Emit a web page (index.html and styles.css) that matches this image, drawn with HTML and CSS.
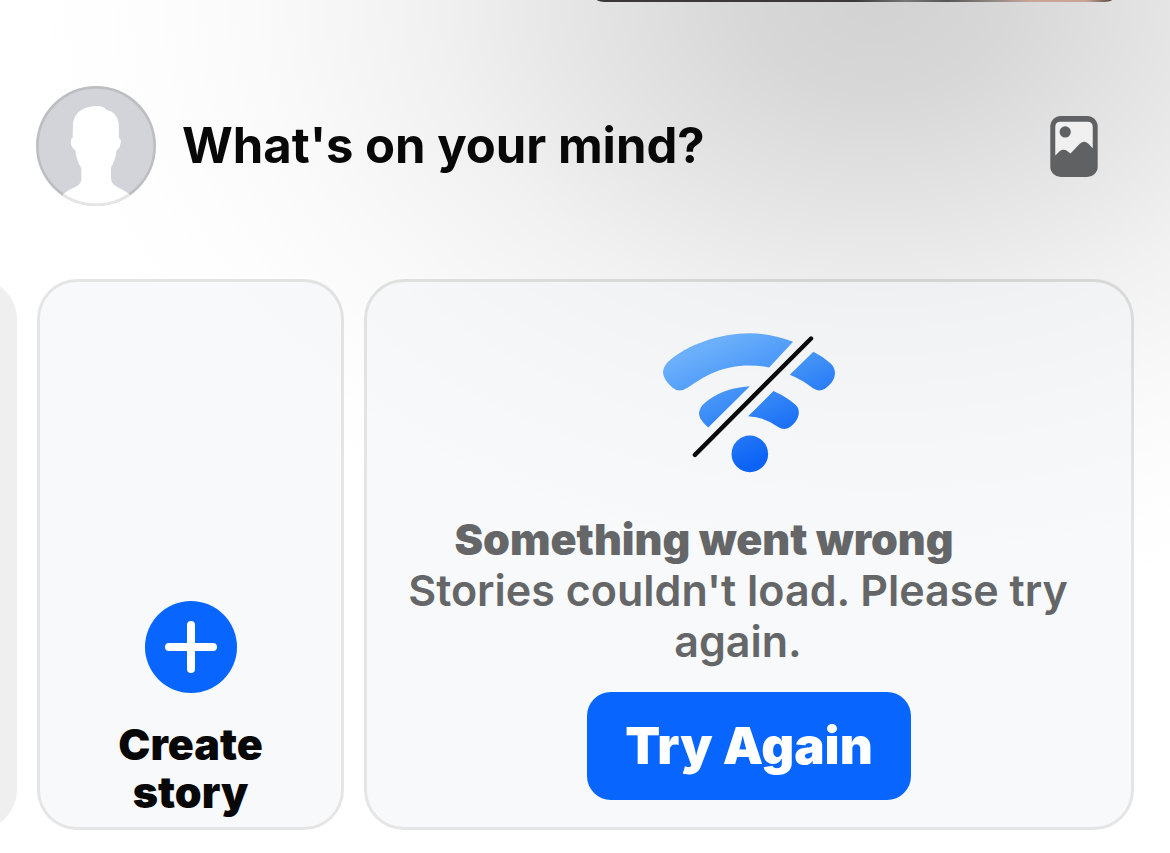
FILE: index.html
```
<!DOCTYPE html>
<html lang="en">
<head>
  <meta charset="UTF-8">
  <meta name="viewport" content="width=device-width, initial-scale=1.0">
  <title>Feed</title>
  <link rel="stylesheet" href="styles.css">
</head>
<body>

  <div class="cover-edge"></div>

  <section class="composer">
    <a href="#" class="avatar" aria-label="Your profile">
      <svg viewBox="108 78 360 360">
        <circle cx="288" cy="258" r="180" fill="#d2d4d9"/>
        <clipPath id="round"><circle cx="288" cy="258" r="180"/></clipPath>
        <path clip-path="url(#round)" fill="#fff" d="M288 138Q308 136 319 149Q352 156 356 190L357 233Q364 236 362 250Q359 267 350 271Q346 302 333 322L333 358Q335 372 350 380Q370 389 388 402L410 450H170L190 402Q208 388 230 379Q244 370 244 358L244 325Q229 302 226 270Q214 265 212 246Q212 236 218 233L219 190Q226 142 288 138Z"/>
        <circle cx="288" cy="258" r="176" fill="none" stroke="#000" stroke-opacity=".1" stroke-width="8"/>
      </svg>
    </a>
    <button class="prompt">What's on your mind?</button>
    <button class="photo-btn" aria-label="Add photo">
      <svg viewBox="91 77 143 184">
        <rect x="91" y="77" width="143" height="184" rx="32" fill="#5f6163"/>
        <path fill="#f0f0f0" d="M122 94H203Q219 94 219 110V174L206 161Q193 149 180 161L152 190L143 183Q131 174 119 183L106 196V110Q106 94 122 94Z"/>
        <circle cx="136" cy="125" r="17" fill="#5f6163"/>
      </svg>
    </button>
  </section>

  <section class="stories">
    <div class="prev-card"></div>

    <button class="card create-card">
      <svg class="plus" viewBox="0 0 92 92">
        <circle cx="46" cy="46" r="46" fill="#0866ff"/>
        <path d="M46 24V68M24 46H68" stroke="#fff" stroke-width="8" stroke-linecap="round"/>
      </svg>
      <span class="create-label">Create story</span>
    </button>

    <div class="card error-card">
      <svg class="wifi" viewBox="69 68 517 420">
        <defs>
          <linearGradient id="blue" gradientUnits="userSpaceOnUse" x1="210" y1="100" x2="370" y2="450">
            <stop offset="0" stop-color="#6cb0fb"/>
            <stop offset=".5" stop-color="#3c8df7"/>
            <stop offset="1" stop-color="#0c63f5"/>
          </linearGradient>
        </defs>
        <g fill="url(#blue)">
          <path d="M330 68Q398 69 460 94L388 171Q360 165 328 165C250 165 195 195 145 231Q118 250 98 232C80 216 70 200 69 186Q69 172 82 156C140 102 240 68 330 68Z"/>
          <path d="M521 124Q550 138 574 160Q586 172 586 190Q584 215 556 235Q538 246 520 234Q488 208 450 193Z"/>
          <path d="M330 228L205 352Q190 340 181 324Q171 304 188 284Q240 234 330 228Z"/>
          <path d="M401 242Q438 258 468 284Q479 294 477 312Q473 335 450 351Q433 362 415 350Q375 320 325 318Z"/>
          <circle cx="330" cy="431" r="55"/>
        </g>
        <path d="M165 434L514 84" stroke="#0a0a0c" stroke-width="13" stroke-linecap="round"/>
      </svg>
      <div class="error-text">
        <h2>Something went wrong</h2>
        <p>Stories couldn't load. Please try again.</p>
      </div>
      <button class="retry-btn">Try Again</button>
    </div>
  </section>

</body>
</html>
```
FILE: styles.css
```
* {
  box-sizing: border-box;
}

body {
  margin: 0;
  min-height: 100vh;
  overflow-x: hidden;
  font-family: Inter, "Liberation Sans", sans-serif;
  color: #080809;
  /* soft shadow falling from the media above */
  background: radial-gradient(ellipse 860px 620px at 75% 0,
    rgba(0, 0, 0, 0.175) 0%,
    rgba(0, 0, 0, 0.155) 15%,
    rgba(0, 0, 0, 0.1) 35%,
    rgba(0, 0, 0, 0.055) 52%,
    rgba(0, 0, 0, 0.024) 70%,
    rgba(0, 0, 0, 0.008) 85%,
    rgba(0, 0, 0, 0) 100%) no-repeat #fff;
}

button {
  border: none;
  padding: 0;
  background: none;
  font-family: inherit;
  color: inherit;
  cursor: pointer;
}

svg {
  display: block;
}

.cover-edge {
  height: 2px;
  margin: 0 5% 0 51%;
  border-radius: 0 0 12px 12px / 0 0 2px 2px;
  background: linear-gradient(to right, #3a3838 50%, #777 60%, #555 68%, #8a8480 76%, #c9a598 84%, #c9a598 95%, #5a4a46 100%);
}

.composer {
  display: flex;
  align-items: center;
  padding: 84px 72px 73px 36px;
}

.avatar svg {
  width: 120px;
  height: 120px;
}

.prompt {
  flex: 1;
  margin-left: 26px;
  text-align: left;
  font-size: 49px;
  font-weight: 700;
  line-height: 60px;
}

.photo-btn svg {
  width: 48px;
  height: 61px;
}

.stories {
  display: flex;
  gap: 20px;
  padding-right: 36px;
}

/* scrolled past, only its right edge shows */
.prev-card {
  width: 80px;
  margin-left: -63px;
  border-radius: 40px;
  background: #efefef;
}

.card {
  display: flex;
  flex-direction: column;
  align-items: center;
  border: 3px solid rgba(0, 0, 0, 0.1);
  border-radius: 40px;
  background: rgba(240, 243, 247, 0.5);
  background-clip: padding-box;
}

.create-card {
  width: 307px;
  justify-content: flex-end;
  padding: 11px 60px;
}

.plus {
  width: 92px;
  height: 92px;
  margin-bottom: 27px;
}

.create-label {
  font-size: 43px;
  font-weight: 900;
  line-height: 48px;
}

.error-card {
  flex: 1;
  padding: 51px 32px 27px;
}

.wifi {
  width: 172px;
  height: 140px;
}

.error-text {
  margin: 41px 22px 25px 0;
  text-align: center;
  font-size: 43px;
  line-height: 51px;
  color: #656668;
}

.error-text h2 {
  margin: 0;
  padding-right: 68px;
  font-size: 43px;
  font-weight: 900;
}

.error-text p {
  margin: 0;
  font-weight: 600;
}

.retry-btn {
  padding: 24px 38px;
  border-radius: 24px;
  background: #0866ff;
  color: #fff;
  font-size: 51px;
  font-weight: 900;
  line-height: 60px;
}
```
